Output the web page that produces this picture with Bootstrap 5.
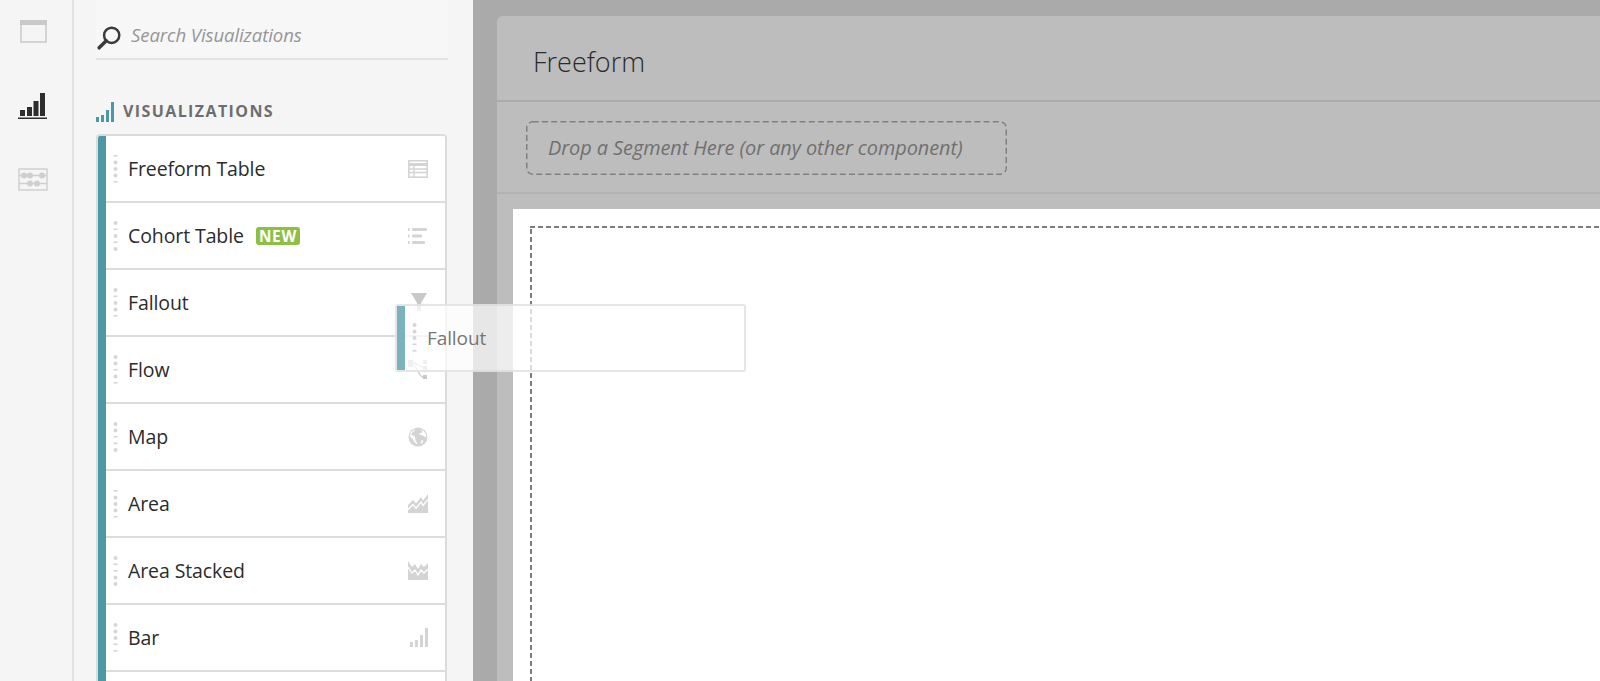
<!doctype html>
<html lang="en"><head><meta charset="utf-8"><title>Freeform</title>
<link href="https://cdn.jsdelivr.net/npm/bootstrap@5.3.0/dist/css/bootstrap.min.css" rel="stylesheet">
<style>
html,body{height:681px;overflow:hidden}
body{font-family:"Open Sans","Noto Sans",sans-serif;background:#aaa;color:#2c2c2c}
.shell{height:681px;width:1600px;overflow:hidden;position:relative}
.rail{width:74px;background:#f5f5f5;border-right:2px solid #e1e1e1;flex:none;padding-top:20px}
.rail svg{display:block}
.rail-bars{margin:50px 0 0 18px}
.rail-win{margin-left:20px}
.rail-aba{margin:48px 0 0 18px}
.sidepanel{width:399px;background:#f5f5f5;flex:none;padding:0 25px 0 22px}
.searchbar{height:60px;background:#f7f7f7;border-bottom:2px solid #e3e3e3;padding:25px 0 0 1px;gap:9px}
.searchbar span{font-style:italic;font-size:18.6px;line-height:22px;color:#969696;letter-spacing:-.1px;margin-top:-1px}
.vis-head{margin-top:41px;height:21px;gap:9px;color:#6e6e6e;font-weight:700;font-size:16px;letter-spacing:1.4px;line-height:21px}
.vis-list{margin-top:12px;border:2px solid #dcdcdc;border-bottom:0;border-radius:4px 4px 0 0;background:#fff;width:351px;overflow:hidden}
.vis-row.list-group-item{height:67px;border:0;border-bottom:2px solid #dcdcdc;border-radius:0;padding:0 17px 0 0;color:#2c2c2c;font-size:19.5px;background:#fff;letter-spacing:-.1px}
.tealbar{width:8px;align-self:stretch;background:#4a99a4;flex:none;margin-bottom:-2px}
.grip{margin:0 10px 0 7px;flex:none}
.newtag{background:#8dbf45;color:#fff;font-weight:700;font-size:15.3px;line-height:18px;border-radius:3px;padding:0 3px;margin-left:12px;letter-spacing:.8px}
.workspace{flex:1;padding:16px 0 0 24px;min-width:0}
.wcard{background:#bdbdbd;border-radius:6px 0 0 0;height:700px}
.wtitle{height:86px;border-bottom:2px solid #ababab;padding:28px 0 0 36px;font-size:27px;line-height:36px;font-weight:300;color:#2a2a2a}
.wdrop{height:92px;border-bottom:2px solid #b2b2b2;padding:19px 0 0 29px}
.dropbox{width:481px;height:54px;border-radius:6px;padding-left:22px;font-style:italic;font-size:19.9px;line-height:53px;color:#707070;letter-spacing:-.05px;background:url("data:image/svg+xml,%3Csvg xmlns='http://www.w3.org/2000/svg' width='481' height='54'%3E%3Crect x='.75' y='.75' width='479.500' height='52.500' rx='6' fill='none' stroke='%23808080' stroke-width='1.500' stroke-dasharray='6 3.200'/%3E%3C/svg%3E") no-repeat}
.wcanvas{margin:15px 0 0 16px;background:#fff;height:600px;padding:17px 0 0 17px}
.dropcanvas{height:600px;background:repeating-linear-gradient(90deg,#7c7c7c 0 5px,transparent 5px 8px) top left/100% 2px no-repeat,repeating-linear-gradient(0deg,#7c7c7c 0 5px,transparent 5px 8px) top left/2px 100% no-repeat}
.ghost{position:absolute;left:395px;top:304px;width:351px;height:68px;background:rgba(255,255,255,.72);border:2px solid rgba(215,215,215,.65);border-radius:3px;color:#767676;font-size:19px;letter-spacing:-.1px}
.ghost .tealbar{background:#7ab3bc;margin:0}
</style></head><body>
<svg width="0" height="0" class="position-absolute"><defs>
<g id="d"><circle cx="2.5" cy="0" r="2"/></g>
<rect id="m" x="0.5" y="-1" width="4" height="1.6"/>
</defs></svg>
<div class="shell d-flex">
<div class="rail">
<svg class="rail-win" width="27" height="23" viewBox="0 0 27 23"><rect x="1" y="1" width="25" height="21" fill="none" stroke="#c9c9c9" stroke-width="1.5"/><rect x="0" y="0" width="27" height="5" fill="#c9c9c9"/></svg>
<svg class="rail-bars" width="29" height="27" viewBox="0 0 29 27"><g fill="#2e2e2e"><rect x="2" y="17" width="5" height="6"/><rect x="9" y="14" width="5" height="9"/><rect x="15.500" y="8" width="5" height="15"/><rect x="22" y="0" width="5" height="23"/><rect x="0" y="24.500" width="29" height="1.500"/></g></svg>
<svg class="rail-aba" width="30" height="23" viewBox="0 0 30 23"><g fill="none" stroke="#cfcfcf" stroke-width="1.500"><rect x="1" y="1" width="28" height="21"/><path d="M1 7.500h28M1 15.500h28"/></g><g fill="#cfcfcf"><circle cx="6" cy="7.500" r="3"/><circle cx="12" cy="7.500" r="3"/><circle cx="24" cy="7.500" r="3"/><circle cx="12" cy="15.500" r="3"/><circle cx="19" cy="15.500" r="3"/></g></svg>
</div>
<div class="sidepanel">
<div class="searchbar d-flex align-items-start">
<svg width="25" height="25" viewBox="0 0 23 23" class="flex-none"><circle cx="13.500" cy="9.500" r="7" fill="none" stroke="#3a3a3a" stroke-width="2.300"/><path d="M8.500 14.500L2 21" stroke="#3a3a3a" stroke-width="3.200" stroke-linecap="round"/></svg>
<span>Search Visualizations</span></div>
<div class="vis-head d-flex align-items-center">
<svg width="18" height="20" viewBox="0 0 18 20"><g fill="#4a99a4"><rect x="0" y="15" width="3" height="5"/><rect x="5" y="13" width="3" height="7"/><rect x="10" y="8" width="3" height="12"/><rect x="15" y="0" width="3" height="20"/></g></svg>
<span>VISUALIZATIONS</span></div>
<div class="list-group vis-list">
<div class="list-group-item vis-row d-flex align-items-center"><i class="tealbar"></i>
<svg class="grip" width="5" height="30" viewBox="0 0 5 30" fill="#d6d6d6"><use href="#m" y="2"/><use href="#d" y="8.500"/><use href="#d" y="15"/><use href="#d" y="21.500"/><use href="#m" y="28"/></svg>
<span>Freeform Table</span>
<svg class="ms-auto" width="20" height="20" viewBox="0 0 20 20"><rect x="0.800" y="1.800" width="18.400" height="16.400" fill="none" stroke="#d4d4d4" stroke-width="1.600"/><path d="M0 5.500h20" stroke="#d4d4d4" stroke-width="3"/><path d="M1 10h18M1 13.500h18M6 7v11" stroke="#d4d4d4" stroke-width="1.400"/></svg></div>
<div class="list-group-item vis-row d-flex align-items-center"><i class="tealbar"></i>
<svg class="grip" width="5" height="30" viewBox="0 0 5 30" fill="#d6d6d6"><use href="#d" y="2"/><use href="#m" y="8.500"/><use href="#d" y="15"/><use href="#m" y="21.500"/><use href="#d" y="28"/></svg>
<span>Cohort Table</span><span class="newtag">NEW</span>
<svg class="ms-auto" width="20" height="20" viewBox="0 0 20 20"><g fill="#d4d4d4"><rect x="4" y="2" width="15" height="3" rx="1"/><rect x="4" y="8.500" width="10" height="3" rx="1"/><rect x="4" y="15" width="13" height="3" rx="1"/><rect x="0" y="2" width="1.500" height="3"/><rect x="0" y="8.500" width="1.500" height="3"/><rect x="0" y="15" width="1.500" height="3"/></g></svg></div>
<div class="list-group-item vis-row d-flex align-items-center"><i class="tealbar"></i>
<svg class="grip" width="5" height="30" viewBox="0 0 5 30" fill="#d6d6d6"><use href="#d" y="2"/><use href="#m" y="8.500"/><use href="#d" y="15"/><use href="#d" y="21.500"/><use href="#m" y="28"/></svg>
<span>Fallout</span>
<svg class="ms-auto" width="18" height="20" viewBox="0 0 18 20"><path d="M1 0h16l-6 10v8H7v-8z" fill="#c9c9c9"/></svg></div>
<div class="list-group-item vis-row d-flex align-items-center"><i class="tealbar"></i>
<svg class="grip" width="5" height="30" viewBox="0 0 5 30" fill="#d6d6d6"><use href="#d" y="2"/><use href="#d" y="8.500"/><use href="#m" y="15"/><use href="#d" y="21.500"/><use href="#m" y="28"/></svg>
<span>Flow</span>
<svg class="ms-auto" width="20" height="20" viewBox="0 0 20 20"><g fill="#c9c9c9"><rect x="0" y="0" width="5" height="7"/><rect x="15" y="0" width="4" height="4"/><rect x="15" y="6" width="4" height="4"/><rect x="15" y="15" width="4" height="4"/></g><path d="M5 3c5 0 5 4 10 4M5 5c5 2 5 11 10 12" fill="none" stroke="#c9c9c9" stroke-width="1.300"/></svg></div>
<div class="list-group-item vis-row d-flex align-items-center"><i class="tealbar"></i>
<svg class="grip" width="5" height="30" viewBox="0 0 5 30" fill="#d6d6d6"><use href="#d" y="2"/><use href="#d" y="8.500"/><use href="#m" y="15"/><use href="#m" y="21.500"/><use href="#d" y="28"/></svg>
<span>Map</span>
<svg class="ms-auto" width="20" height="20" viewBox="0 0 20 20"><circle cx="10" cy="10" r="9.500" fill="#d4d4d4"/><path d="M8 1.500C5.500 3 3 4.500 2 7c2 .5 3 2 5 2.500.5 1.500-.5 3 1 5 1 .5 1 2 1.500 3-2-1-4-3-4.500-5.500C3 11 2.200 9.500 1.500 9M12 2c1 1 3 1.500 2 3.500-1 1-3 .5-3 2 1.500 1 3 0 4.500 1.500.5 1 1.500 1 3 .5-.5-3-3-6.500-6.500-7.500zM14 13c1 0 1.500 1 1 2l-2 2c-.5-1 0-3 1-4z" fill="#fff"/></svg></div>
<div class="list-group-item vis-row d-flex align-items-center"><i class="tealbar"></i>
<svg class="grip" width="5" height="30" viewBox="0 0 5 30" fill="#d6d6d6"><use href="#m" y="2"/><use href="#d" y="8.500"/><use href="#d" y="15"/><use href="#d" y="21.500"/><use href="#m" y="28"/></svg>
<span>Area</span>
<svg class="ms-auto" width="20" height="20" viewBox="0 0 20 20"><path d="M0 11l5-5 3 3.500L13 3l2 3.500L20 0v19H0z" fill="#d4d4d4"/><path d="M0 15.500l5-5 3 4 5-6.500 2 3.500 5-6" fill="none" stroke="#fff" stroke-width="1.300"/></svg></div>
<div class="list-group-item vis-row d-flex align-items-center"><i class="tealbar"></i>
<svg class="grip" width="5" height="30" viewBox="0 0 5 30" fill="#d6d6d6"><use href="#d" y="2"/><use href="#m" y="8.500"/><use href="#m" y="15"/><use href="#d" y="21.500"/><use href="#d" y="28"/></svg>
<span>Area Stacked</span>
<svg class="ms-auto" width="20" height="20" viewBox="0 0 20 20"><path d="M0 0l4 6 3-3 3 5 3-5 3 3 4-4v17H0z" fill="#d4d4d4"/><path d="M0 6l4 6 3-3 3 5 3-5 3 3 4-4" fill="none" stroke="#fff" stroke-width="1.300"/></svg></div>
<div class="list-group-item vis-row d-flex align-items-center"><i class="tealbar"></i>
<svg class="grip" width="5" height="30" viewBox="0 0 5 30" fill="#d6d6d6"><use href="#d" y="2"/><use href="#d" y="8.500"/><use href="#d" y="15"/><use href="#m" y="21.500"/><use href="#m" y="28"/></svg>
<span>Bar</span>
<svg class="ms-auto" width="18" height="20" viewBox="0 0 18 20"><g fill="#d4d4d4"><rect x="0" y="14" width="3" height="5"/><rect x="5" y="12" width="3" height="7"/><rect x="10" y="7" width="3" height="12"/><rect x="15" y="0" width="3" height="19"/></g></svg></div>
<div class="list-group-item vis-row"><i class="tealbar d-block h-100"></i></div>
</div>
</div>
<div class="workspace"><div class="wcard">
<div class="wtitle">Freeform</div>
<div class="wdrop"><div class="dropbox">Drop a Segment Here (or any other component)</div></div>
<div class="wcanvas"><div class="dropcanvas"></div></div>
</div></div>
<div class="ghost d-flex align-items-center"><i class="tealbar"></i>
<svg class="grip" width="5" height="30" viewBox="0 0 5 30" fill="#d6d6d6"><use href="#d" y="2"/><use href="#d" y="8.500"/><use href="#d" y="15"/><use href="#m" y="21.500"/><use href="#m" y="28"/></svg>
<span>Fallout</span></div>
</div>
</body></html>
